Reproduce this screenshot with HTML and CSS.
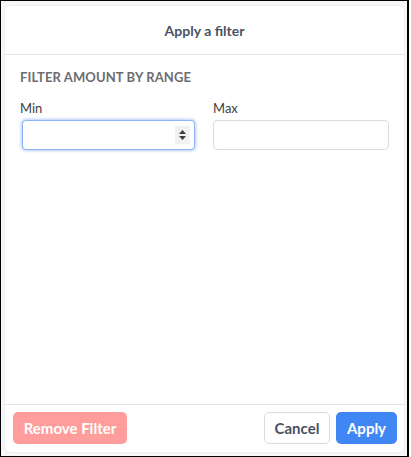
FILE: index.html
```html
<!DOCTYPE html>
<html>
<head>
<meta charset="utf-8">
<link rel="stylesheet" href="styles.css">
</head>
<body>
<div class="frame">
  <div class="modal">
    <div class="modal-header">Apply a filter</div>
    <div class="modal-body">
      <div class="section-title">FILTER AMOUNT BY RANGE</div>
      <div class="fields">
        <div class="field">
          <label class="label">Min</label>
          <div class="input input-focus">
            <span class="spinner">
              <svg width="9" height="12" viewBox="0 0 9 12"><path d="M4.5 1 L8 5 L1 5 Z" fill="#3e3e3c"/><path d="M1 7 L8 7 L4.5 11 Z" fill="#3e3e3c"/></svg>
            </span>
          </div>
        </div>
        <div class="field">
          <label class="label">Max</label>
          <div class="input"></div>
        </div>
      </div>
    </div>
    <div class="modal-footer">
      <button class="btn btn-remove">Remove Filter</button>
      <div class="footer-right">
        <button class="btn btn-cancel">Cancel</button>
        <button class="btn btn-apply">Apply</button>
      </div>
    </div>
  </div>
</div>
</body>
</html>
```

FILE: styles.css
```css
html, body {
  margin: 0;
  padding: 0;
  background: #ffffff;
}
body {
  font-family: Lato, "Open Sans", "Liberation Sans", sans-serif;
  width: 411px;
  height: 457px;
}
.frame {
  box-sizing: border-box;
  width: 409px;
  height: 457px;
  border: 1px solid #000;
  border-right-width: 2px;
  border-bottom-width: 1px;
  background: #f7f7f8;
  padding: 5px 3px 3px 4px;
}
.modal {
  box-sizing: border-box;
  width: 399px;
  height: 446px;
  background: #fff;
  border-radius: 5px;
  box-shadow: 0 0 2px rgba(0,0,0,0.12);
  display: flex;
  flex-direction: column;
}
.modal-header {
  height: 49px;
  border-bottom: 1px solid #e4e4e4;
  display: flex;
  align-items: center;
  justify-content: center;
  font-size: 14px;
  font-weight: 700;
  color: #4b5260;
  padding-top: 1px;
  box-sizing: border-box;
}
.modal-body {
  flex: 1;
  padding: 12px 15px 0 15px;
}
.section-title {
  font-size: 13px;
  font-weight: 700;
  color: #6c6d70;
  line-height: 20px;
  letter-spacing: 0.1px;
}
.fields {
  display: grid;
  grid-template-columns: 176px 176px;
  column-gap: 17px;
  margin-top: 13px;
}
.label {
  display: block;
  font-size: 13px;
  color: #3e3e3c;
  line-height: 16px;
  margin-bottom: 4px;
}
.input {
  box-sizing: border-box;
  height: 30px;
  border: 1px solid #dddbda;
  border-radius: 4px;
  background: #fff;
  position: relative;
}
.input-focus {
  margin-left: 2px;
  width: 173px;
  margin-top: 1px;
  border-color: #8fb3f5;
  box-shadow: 0 0 3px 1px #b5cdfa;
}
.spinner {
  position: absolute;
  right: 4px;
  top: 5px;
  width: 15px;
  height: 18px;
  background: #f1f1f1;
  display: flex;
  align-items: center;
  justify-content: center;
}
.modal-footer {
  height: 48px;
  border-top: 1px solid #e4e4e4;
  box-sizing: border-box;
  display: flex;
  align-items: center;
  justify-content: space-between;
  padding: 0 7px 1px 8px;
}
.footer-right {
  display: flex;
  gap: 6px;
}
.btn {
  font-family: Lato, "Open Sans", "Liberation Sans", sans-serif;
  font-size: 15px;
  font-weight: 700;
  height: 32px;
  border-radius: 5px;
  border: 1px solid transparent;
  padding: 0;
  box-sizing: border-box;
}
.btn-remove {
  width: 114px;
  background: #fe9d9b;
  color: #fff;
}
.btn-cancel {
  width: 66px;
  background: #fff;
  border-color: #dcdcdc;
  color: #4b5260;
}
.btn-apply {
  width: 61px;
  background: #4187f4;
  color: #fff;
}
```
